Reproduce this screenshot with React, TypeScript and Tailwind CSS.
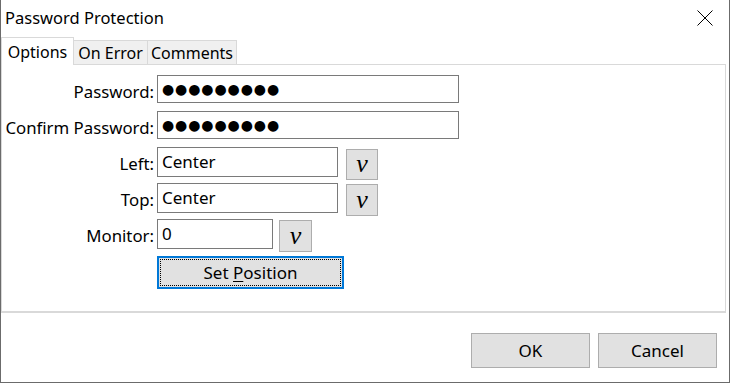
import React from "react";

const Dots = () => (
  <span className="font-['DejaVu_Sans',sans-serif] text-[14px] tracking-[0.9px] leading-none">●●●●●●●●●</span>
);

function Field({ w, h = 28, children }: { w: string; h?: number; children?: React.ReactNode }) {
  return (
    <div
      className={`${w} ${h === 28 ? "h-[28px]" : "h-[30px]"} flex items-center border border-[#7a7a7a] bg-white px-[4px] text-[17px]`}
    >
      {children}
    </div>
  );
}

function VBtn({ mt, size }: { mt: string; size: string }) {
  return (
    <button
      className={`${mt} ${size} ml-auto flex items-end justify-center border border-[#adadad] bg-[#e1e1e1] pb-[2px] font-['Liberation_Serif',serif] text-[26px] font-normal italic leading-none`}
    >
      v
    </button>
  );
}

function Label({ children }: { children: React.ReactNode }) {
  return (
    <div className="flex h-[28px] w-[155px] flex-none items-center justify-end pt-[5px] pr-[3px] text-[16.8px]">
      {children}
    </div>
  );
}

export default function App() {
  return (
    <div className="flex h-[383px] w-[730px] flex-col border-x border-b border-[#6b6b6b] bg-white font-['Noto_Sans',sans-serif] text-black">
      {/* title bar */}
      <div className="flex h-[37px] flex-none items-center justify-between pl-[4px] pr-[16px]">
        <span className="text-[16.5px]">Password Protection</span>
        <svg width="16" height="16" viewBox="0 0 16 16" className="-mt-[2px]">
          <path d="M0.5 0.5 L15.5 15.5 M15.5 0.5 L0.5 15.5" stroke="#000" strokeWidth="1" />
        </svg>
      </div>

      {/* tabs */}
      <div className="flex h-[27px] flex-none items-end">
        <div className="relative z-10 -mb-px flex h-[28px] w-[73px] items-center justify-center border border-b-0 border-[#d9d9d9] bg-white text-[16px]">
          Options
        </div>
        <div className="flex h-[24px] w-[74px] items-center justify-center border-t border-r border-[#d9d9d9] bg-[#f0f0f0] text-[16px]">
          On Error
        </div>
        <div className="flex h-[24px] w-[89px] items-center justify-center border-t border-r border-[#d9d9d9] bg-[#f0f0f0] text-[16px]">
          Comments
        </div>
      </div>

      {/* panel */}
      <div className="flex h-[249px] w-[725px] flex-none flex-col border border-b-2 border-[#d9d9d9] bg-white pt-[10px]">
        <div className="flex h-[36px] items-start">
          <Label>Password:</Label>
          <Field w="w-[302px]">
            <Dots />
          </Field>
        </div>
        <div className="flex h-[36px] items-start">
          <Label>Confirm Password:</Label>
          <Field w="w-[302px]">
            <Dots />
          </Field>
        </div>
        <div className="flex h-[36px] items-start">
          <Label>Left:</Label>
          <div className="flex w-[221px] items-start">
            <Field w="w-[181px]" h={30}>Center</Field>
            <VBtn mt="mt-[2px]" size="h-[31px] w-[32px]" />
          </div>
        </div>
        <div className="flex h-[36px] items-start">
          <Label>Top:</Label>
          <div className="flex w-[221px] items-start">
            <Field w="w-[181px]" h={30}>Center</Field>
            <VBtn mt="mt-[1px]" size="h-[32px] w-[32px]" />
          </div>
        </div>
        <div className="flex h-[37px] items-start">
          <Label>Monitor:</Label>
          <div className="flex w-[155px] items-start">
            <Field w="w-[116px]" h={30}>0</Field>
            <VBtn mt="mt-[1px]" size="h-[32px] w-[33px]" />
          </div>
        </div>
        <div className="flex items-start pl-[155px]">
          <button className="h-[33px] w-[187px] border-2 border-[#0078d7] bg-[#e1e1e1] p-px">
            <div className="flex h-full w-full items-center justify-center border border-dotted border-black text-[17px]">
              Set&nbsp;<span className="underline underline-offset-2">P</span>osition
            </div>
          </button>
        </div>
      </div>

      {/* footer */}
      <div className="flex flex-1 items-start justify-end gap-[8px] pt-[20px] pr-[12px]">
        <button className="h-[35px] w-[119px] border border-[#adadad] bg-[#e1e1e1] text-[17px]">OK</button>
        <button className="h-[35px] w-[119px] border border-[#adadad] bg-[#e1e1e1] text-[17px]">Cancel</button>
      </div>
    </div>
  );
}
